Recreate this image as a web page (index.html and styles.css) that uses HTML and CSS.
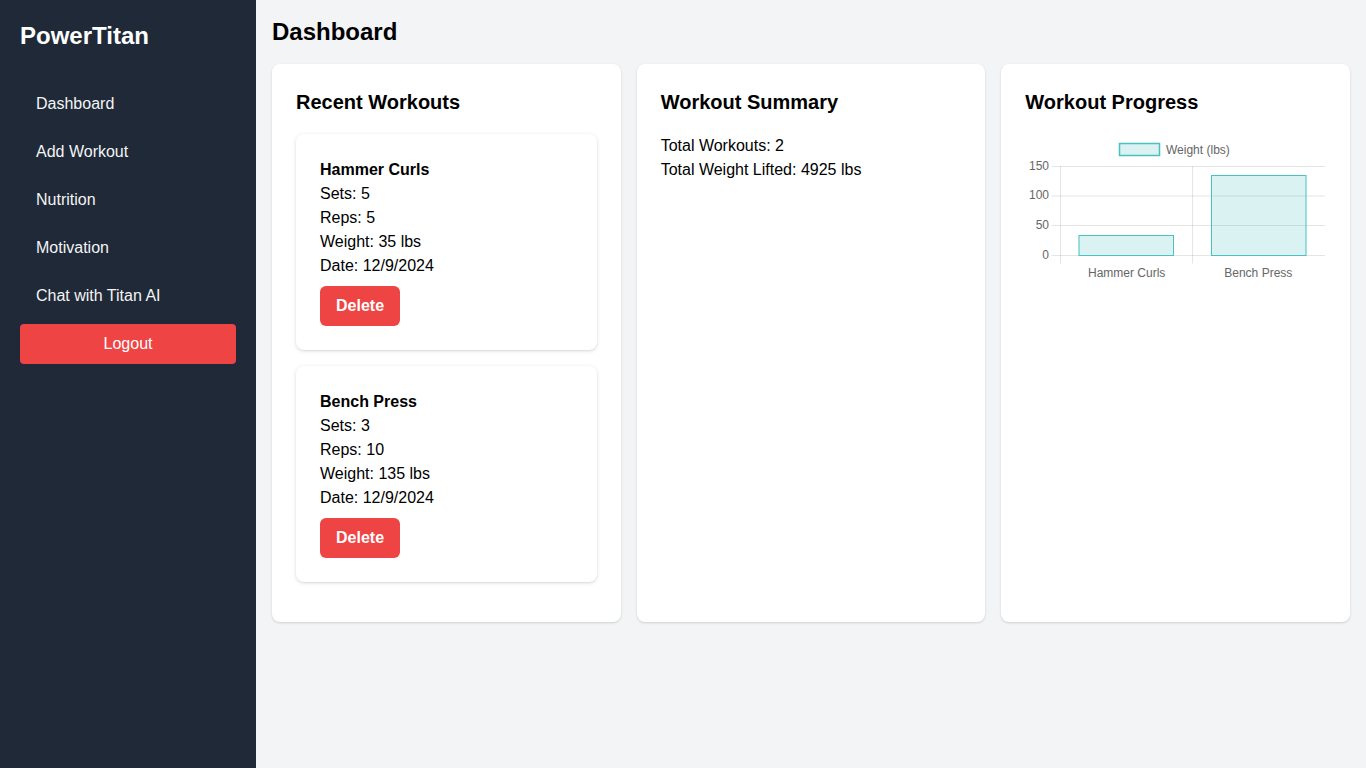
FILE: index.html
```html
<!DOCTYPE html>
<html lang="en">
<head>
<meta charset="utf-8">
<title>PowerTitan Dashboard</title>
<link rel="stylesheet" href="styles.css">
</head>
<body>
<div class="layout">
  <aside class="sidebar">
    <div class="brand">PowerTitan</div>
    <nav class="nav">
      <a class="nav-link" href="#">Dashboard</a>
      <a class="nav-link" href="#">Add Workout</a>
      <a class="nav-link" href="#">Nutrition</a>
      <a class="nav-link" href="#">Motivation</a>
      <a class="nav-link" href="#">Chat with Titan AI</a>
    </nav>
    <button class="logout">Logout</button>
  </aside>
  <main class="main">
    <h1 class="page-title">Dashboard</h1>
    <div class="grid">
      <section class="card">
        <h2 class="card-title">Recent Workouts</h2>
        <div class="workout">
          <div class="workout-name">Hammer Curls</div>
          <div class="line">Sets: 5</div>
          <div class="line">Reps: 5</div>
          <div class="line">Weight: 35 lbs</div>
          <div class="line">Date: 12/9/2024</div>
          <button class="delete">Delete</button>
        </div>
        <div class="workout">
          <div class="workout-name">Bench Press</div>
          <div class="line">Sets: 3</div>
          <div class="line">Reps: 10</div>
          <div class="line">Weight: 135 lbs</div>
          <div class="line">Date: 12/9/2024</div>
          <button class="delete">Delete</button>
        </div>
      </section>
      <section class="card">
        <h2 class="card-title">Workout Summary</h2>
        <div class="line">Total Workouts: 2</div>
        <div class="line">Total Weight Lifted: 4925 lbs</div>
      </section>
      <section class="card">
        <h2 class="card-title">Workout Progress</h2>
        <svg class="chart" width="300" height="150" viewBox="0 0 300 150">
          <rect x="94.5" y="9.5" width="40" height="12" fill="rgba(75,192,192,0.2)" stroke="rgb(75,192,192)" stroke-width="1.5"/>
          <text class="legend" x="141" y="19.5">Weight (lbs)</text>
          <g stroke="rgba(0,0,0,0.1)" stroke-width="1">
            <line x1="26.5" y1="32.5" x2="300" y2="32.5"/>
            <line x1="26.5" y1="62" x2="300" y2="62"/>
            <line x1="26.5" y1="91.5" x2="300" y2="91.5"/>
            <line x1="26.5" y1="121.5" x2="300" y2="121.5"/>
            <line x1="35.5" y1="32" x2="35.5" y2="129.5"/>
            <line x1="167.5" y1="32" x2="167.5" y2="129.5"/>
          </g>
          <g class="tick" text-anchor="end">
            <text x="24" y="35.5">150</text>
            <text x="24" y="65">100</text>
            <text x="24" y="95">50</text>
            <text x="24" y="125">0</text>
          </g>
          <rect x="54" y="101.5" width="94.5" height="20" fill="rgba(75,192,192,0.2)" stroke="rgb(75,192,192)" stroke-width="1"/>
          <rect x="186.5" y="41.5" width="94.5" height="80" fill="rgba(75,192,192,0.2)" stroke="rgb(75,192,192)" stroke-width="1"/>
          <g class="tick" text-anchor="middle">
            <text x="101.7" y="143">Hammer Curls</text>
            <text x="233.3" y="143">Bench Press</text>
          </g>
        </svg>
      </section>
    </div>
  </main>
</div>
</body>
</html>
```
FILE: styles.css
```css
* { box-sizing: border-box; }
html, body { margin: 0; padding: 0; }
body {
  font-family: "Liberation Sans", Arial, sans-serif;
  font-size: 16px;
  line-height: 24px;
  color: #000;
  background: #f3f4f6;
}
.layout {
  display: flex;
  min-height: 768px;
}
.sidebar {
  width: 256px;
  flex: none;
  background: #1f2937;
  padding: 20px;
  display: flex;
  flex-direction: column;
}
.brand {
  color: #fff;
  font-size: 24px;
  line-height: 32px;
  font-weight: 700;
  margin-bottom: 28px;
}
.nav {
  display: flex;
  flex-direction: column;
}
.nav-link {
  display: block;
  padding: 12px 16px;
  color: #f3f4f6;
  text-decoration: none;
  font-size: 16px;
  line-height: 24px;
}
.logout {
  margin-top: 4px;
  height: 40px;
  border: none;
  border-radius: 4px;
  background: #ef4444;
  color: #fff;
  font-family: inherit;
  font-size: 16px;
}
.main {
  flex: 1;
  padding: 16px;
}
.page-title {
  margin: 0 0 16px;
  font-size: 24px;
  line-height: 32px;
  font-weight: 700;
}
.grid {
  display: grid;
  grid-template-columns: repeat(3, 1fr);
  gap: 16px;
}
.card {
  background: #fff;
  border-radius: 8px;
  box-shadow: 0 1px 3px rgba(0,0,0,0.1), 0 1px 2px rgba(0,0,0,0.06);
  padding: 24px;
}
.card-title {
  margin: 0 0 18px;
  font-size: 20px;
  line-height: 28px;
  font-weight: 700;
}
.workout {
  background: #fff;
  border-radius: 8px;
  box-shadow: 0 1px 4px rgba(0,0,0,0.12), 0 1px 2px rgba(0,0,0,0.06);
  padding: 24px;
  margin-bottom: 16px;
}
.workout-name {
  font-weight: 700;
}
.delete {
  margin-top: 8px;
  height: 40px;
  padding: 0 16px;
  border: none;
  border-radius: 6px;
  background: #ef4444;
  color: #fff;
  font-family: inherit;
  font-size: 16px;
  font-weight: 700;
}
.chart {
  display: block;
  font-family: "Liberation Sans", Arial, sans-serif;
}
.legend, .tick {
  font-size: 12px;
  fill: #666;
}
```
